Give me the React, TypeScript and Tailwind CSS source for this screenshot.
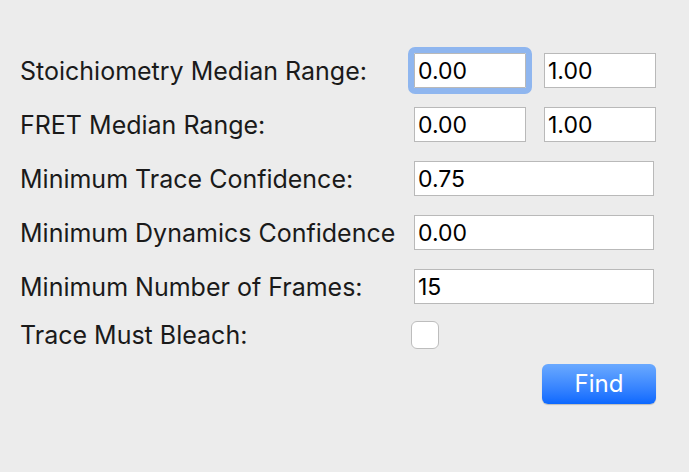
import React from "react";

type Row = {
  label: string;
  values: string[];
  focused?: boolean;
};

const rows: Row[] = [
  { label: "Stoichiometry Median Range:", values: ["0.00", "1.00"], focused: true },
  { label: "FRET Median Range:", values: ["0.00", "1.00"] },
  { label: "Minimum Trace Confidence:", values: ["0.75"] },
  { label: "Minimum Dynamics Confidence", values: ["0.00"] },
  { label: "Minimum Number of Frames:", values: ["15"] },
];

function Field({ value, focused, wide }: { value: string; focused?: boolean; wide?: boolean }) {
  return (
    <div
      className={
        (wide ? "w-[240px] " : "w-[112px] ") +
        "h-[35px] bg-white border border-[#b9b9b9] flex items-center pl-[3px] pt-[1px] text-[23px] text-black " +
        (focused ? "outline-[6px] outline outline-[#8fb6ef] rounded-[1px] outline-offset-0" : "")
      }
    >
      {value}
    </div>
  );
}

export default function App() {
  return (
    <div
      className="w-[689px] h-[472px] bg-[#ececec] pt-[53px] pl-[20px]"
      style={{ fontFamily: "Inter, 'Liberation Sans', sans-serif" }}
    >
      <div className="flex flex-col gap-[19px]">
        {rows.map((r) => (
          <div key={r.label} className="flex items-center h-[35px]">
            <div className="w-[394px] text-[25px] text-[#1a1a1a] whitespace-nowrap pt-[2px]">{r.label}</div>
            {r.values.length === 2 ? (
              <div className="flex gap-[18px]">
                <Field value={r.values[0]} focused={r.focused} />
                <Field value={r.values[1]} />
              </div>
            ) : (
              <Field value={r.values[0]} wide />
            )}
          </div>
        ))}
      </div>
      <div className="flex items-center mt-[17px] h-[28px]">
        <div className="w-[391px] text-[25px] text-[#1a1a1a] pt-[2px]">Trace Must Bleach:</div>
        <div className="w-[28px] h-[28px] bg-white border border-[#bdbdbd] rounded-[6px]" />
      </div>
      <div className="flex justify-end w-[636px] mt-[15px]">
        <button className="w-[114px] h-[40px] rounded-[6px] bg-gradient-to-b from-[#6aa9ff] to-[#0a68ff] text-white text-[24px] shadow-[0_1px_1px_rgba(0,0,0,0.2)]">
          Find
        </button>
      </div>
    </div>
  );
}
